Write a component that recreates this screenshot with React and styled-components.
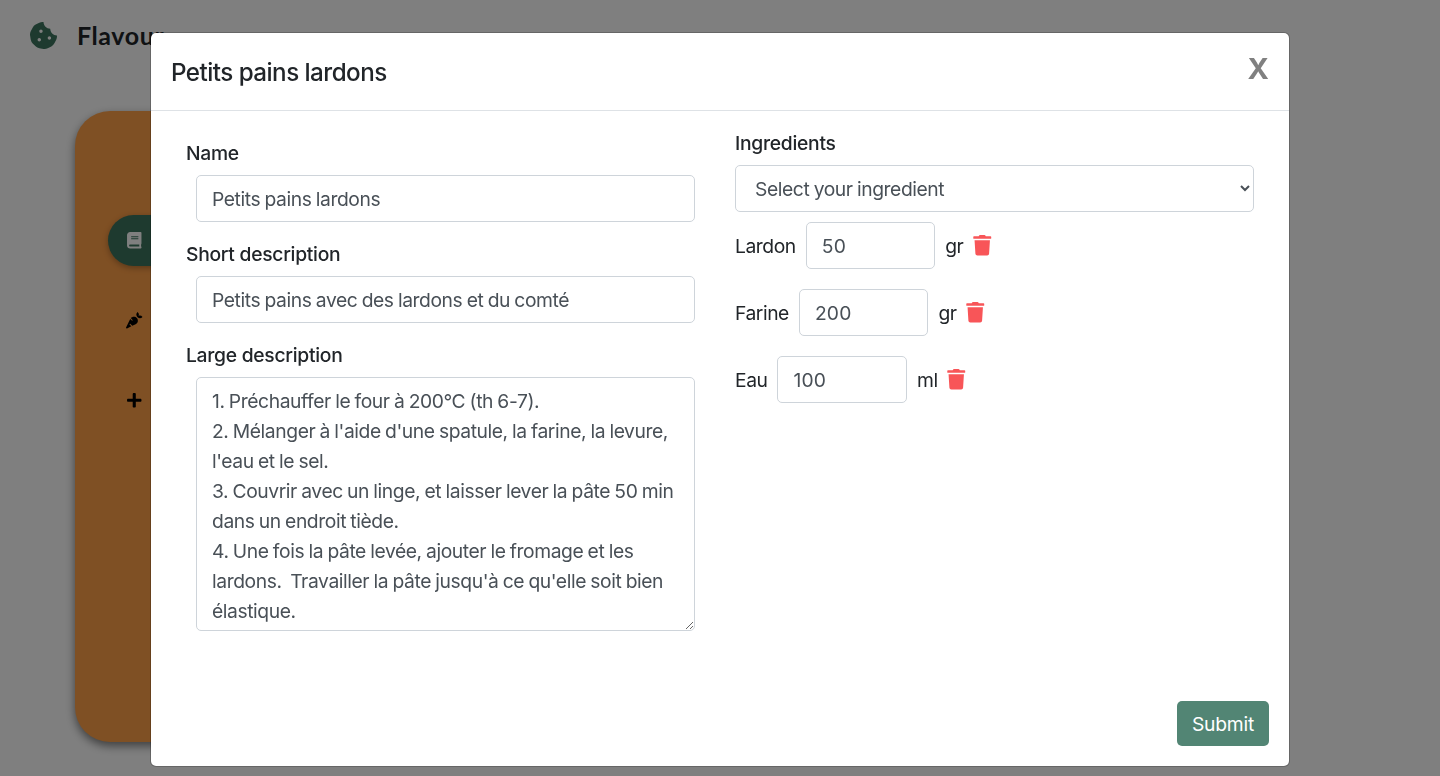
import React from "react";
import styled, { createGlobalStyle } from "styled-components";
import { FaBook, FaCarrot, FaCookieBite, FaPlus, FaTrash } from "react-icons/fa";

const GlobalStyle = createGlobalStyle`
  *, *::before, *::after { box-sizing: border-box; }
  html { font-size: 20px; }
  body {
    margin: 0;
    height: 100vh;
    overflow: hidden;
    background: #fff;
    color: #212529;
    font-family: Inter, "Liberation Sans", sans-serif;
    font-size: 19.3px;
    line-height: 30px;
  }
`;

const Page = styled.div`
  height: 100vh;
  display: flex;
  flex-direction: column;
`;

const TopBar = styled.header`
  display: flex;
  align-items: center;
  gap: 20px;
  height: 71px;
  padding-left: 30px;
  color: #3c745e;
`;

const Brand = styled.span`
  padding-bottom: 2px;
  font-family: Lato, sans-serif;
  font-weight: 700;
  font-size: 25px;
  letter-spacing: 0.6px;
  color: #212529;
`;

const SideMenu = styled.nav`
  width: 300px;
  height: 631px;
  margin: 40px 0 0 75px;
  padding: 104px 33px 0;
  border-radius: 35px;
  background: #ffa048;
  box-shadow: 0 4px 10px rgba(0, 0, 0, 0.5);
`;

const MenuItem = styled.div`
  display: flex;
  align-items: center;
  height: 51px;
  margin-bottom: 29px;
  padding-left: 18px;
  border-radius: 26px;
  font-size: 16.5px;
  color: ${(p) => (p.$active ? "#fff" : "#000")};
  background: ${(p) => (p.$active ? "#3c745e" : "transparent")};
  box-shadow: ${(p) => (p.$active ? "0 2px 6px rgba(0, 0, 0, 0.3)" : "none")};
`;

const Backdrop = styled.div`
  position: fixed;
  inset: 0;
  display: flex;
  justify-content: center;
  align-items: flex-start;
  padding-top: 32px;
  background: rgba(0, 0, 0, 0.5);
`;

const Dialog = styled.section`
  display: flex;
  flex-direction: column;
  width: 1140px;
  height: 735px;
  border: 1px solid rgba(0, 0, 0, 0.2);
  border-radius: 6px;
  background: #fff;
  background-clip: padding-box;
`;

const DialogHeader = styled.header`
  display: flex;
  justify-content: space-between;
  height: 78px;
  padding: 20px;
  border-bottom: 1px solid #dee2e6;
`;

const Title = styled.h4`
  margin: 0;
  font-size: 24.2px;
  font-weight: 500;
  line-height: 40px;
  letter-spacing: -0.53px;
`;

const CloseButton = styled.button`
  height: 32px;
  padding: 0;
  border: 0;
  background: none;
  color: #808080;
  font: 700 29px/32px Inter, sans-serif;
`;

const DialogBody = styled.form`
  display: flex;
  flex: 1;
  padding: 20px;
`;

const Column = styled.div`
  flex: 1;
  min-width: 0;
  padding: 0 15px;
`;

const Field = styled.div`
  padding: 10px 0;
`;

const Label = styled.label`
  display: block;
  margin-bottom: 10px;
  font-size: 19.3px;
  font-weight: 500;
  line-height: 24px;
  letter-spacing: -0.28px;
`;

const control = `
  display: block;
  border: 1px solid #ced4da;
  border-radius: 5px;
  background: #fff;
  color: #495057;
  font-family: Inter, "Liberation Sans", sans-serif;
  font-size: 19.3px;
  line-height: 30px;
  letter-spacing: -0.42px;
  word-spacing: -0.7px;
  padding: 7.5px 15px;
  outline: none;
`;

const Input = styled.input`
  ${control}
  width: calc(100% - 20px);
  height: 47px;
  margin-left: 10px;
`;

const TextArea = styled.textarea`
  ${control}
  width: calc(100% - 20px);
  height: 254px;
  margin-left: 10px;
  overflow: hidden;
  resize: vertical;
`;

const Select = styled.select`
  ${control}
  width: 100%;
  height: 47px;
`;

const Ingredient = styled.div`
  display: flex;
  align-items: center;
  margin: 10px 0 20px;

  & + & { margin-top: 0; }
`;

const Caption = styled.span`
  letter-spacing: -0.45px;
`;

const Quantity = styled.input`
  ${control}
  width: 129.5px;
  height: 47px;
  margin: 0 10px;
  letter-spacing: 0.2px;
`;

const DeleteIcon = styled(FaTrash)`
  margin-left: 8.5px;
  font-size: 20.5px;
  color: #f85558;
`;

const DialogFooter = styled.footer`
  display: flex;
  justify-content: flex-end;
  padding: 0 20px 20px;
`;

const SubmitButton = styled.button`
  width: 92px;
  height: 45px;
  padding: 0;
  border: 0;
  border-radius: 5px;
  background: #528574;
  color: #fff;
  font: 400 19.3px/30px Inter, sans-serif;
  letter-spacing: -0.2px;
`;

const ingredients = [
  { name: "Lardon", quantity: 50, unit: "gr" },
  { name: "Farine", quantity: 200, unit: "gr" },
  { name: "Eau", quantity: 100, unit: "ml" },
];

const recipe = `1. Préchauffer le four à 200°C (th 6-7).
2. Mélanger à l'aide d'une spatule, la farine, la levure, l'eau et le sel.
3. Couvrir avec un linge, et laisser lever la pâte 50 min dans un endroit tiède.
4. Une fois la pâte levée, ajouter le fromage et les lardons.  Travailler la pâte jusqu'à ce qu'elle soit bien élastique.`;

export default function App() {
  return (
    <>
      <GlobalStyle />
      <Page>
        <TopBar>
          <FaCookieBite size={27} />
          <Brand>Flavour</Brand>
        </TopBar>
        <SideMenu>
          <MenuItem $active><FaBook /></MenuItem>
          <MenuItem><FaCarrot /></MenuItem>
          <MenuItem><FaPlus /></MenuItem>
        </SideMenu>
      </Page>
      <Backdrop>
        <Dialog>
          <DialogHeader>
            <Title>Petits pains lardons</Title>
            <CloseButton>X</CloseButton>
          </DialogHeader>
          <DialogBody>
            <Column>
              <Field>
                <Label>Name</Label>
                <Input defaultValue="Petits pains lardons" />
              </Field>
              <Field>
                <Label>Short description</Label>
                <Input defaultValue="Petits pains avec des lardons et du comté" />
              </Field>
              <Field>
                <Label>Large description</Label>
                <TextArea defaultValue={recipe} />
              </Field>
            </Column>
            <Column>
              <Label>Ingredients</Label>
              <Select>
                <option>Select your ingredient</option>
              </Select>
              {ingredients.map((item) => (
                <Ingredient key={item.name}>
                  <Caption>{item.name}</Caption>
                  <Quantity defaultValue={item.quantity} />
                  <Caption>{item.unit}</Caption>
                  <DeleteIcon />
                </Ingredient>
              ))}
            </Column>
          </DialogBody>
          <DialogFooter>
            <SubmitButton type="button">Submit</SubmitButton>
          </DialogFooter>
        </Dialog>
      </Backdrop>
    </>
  );
}
